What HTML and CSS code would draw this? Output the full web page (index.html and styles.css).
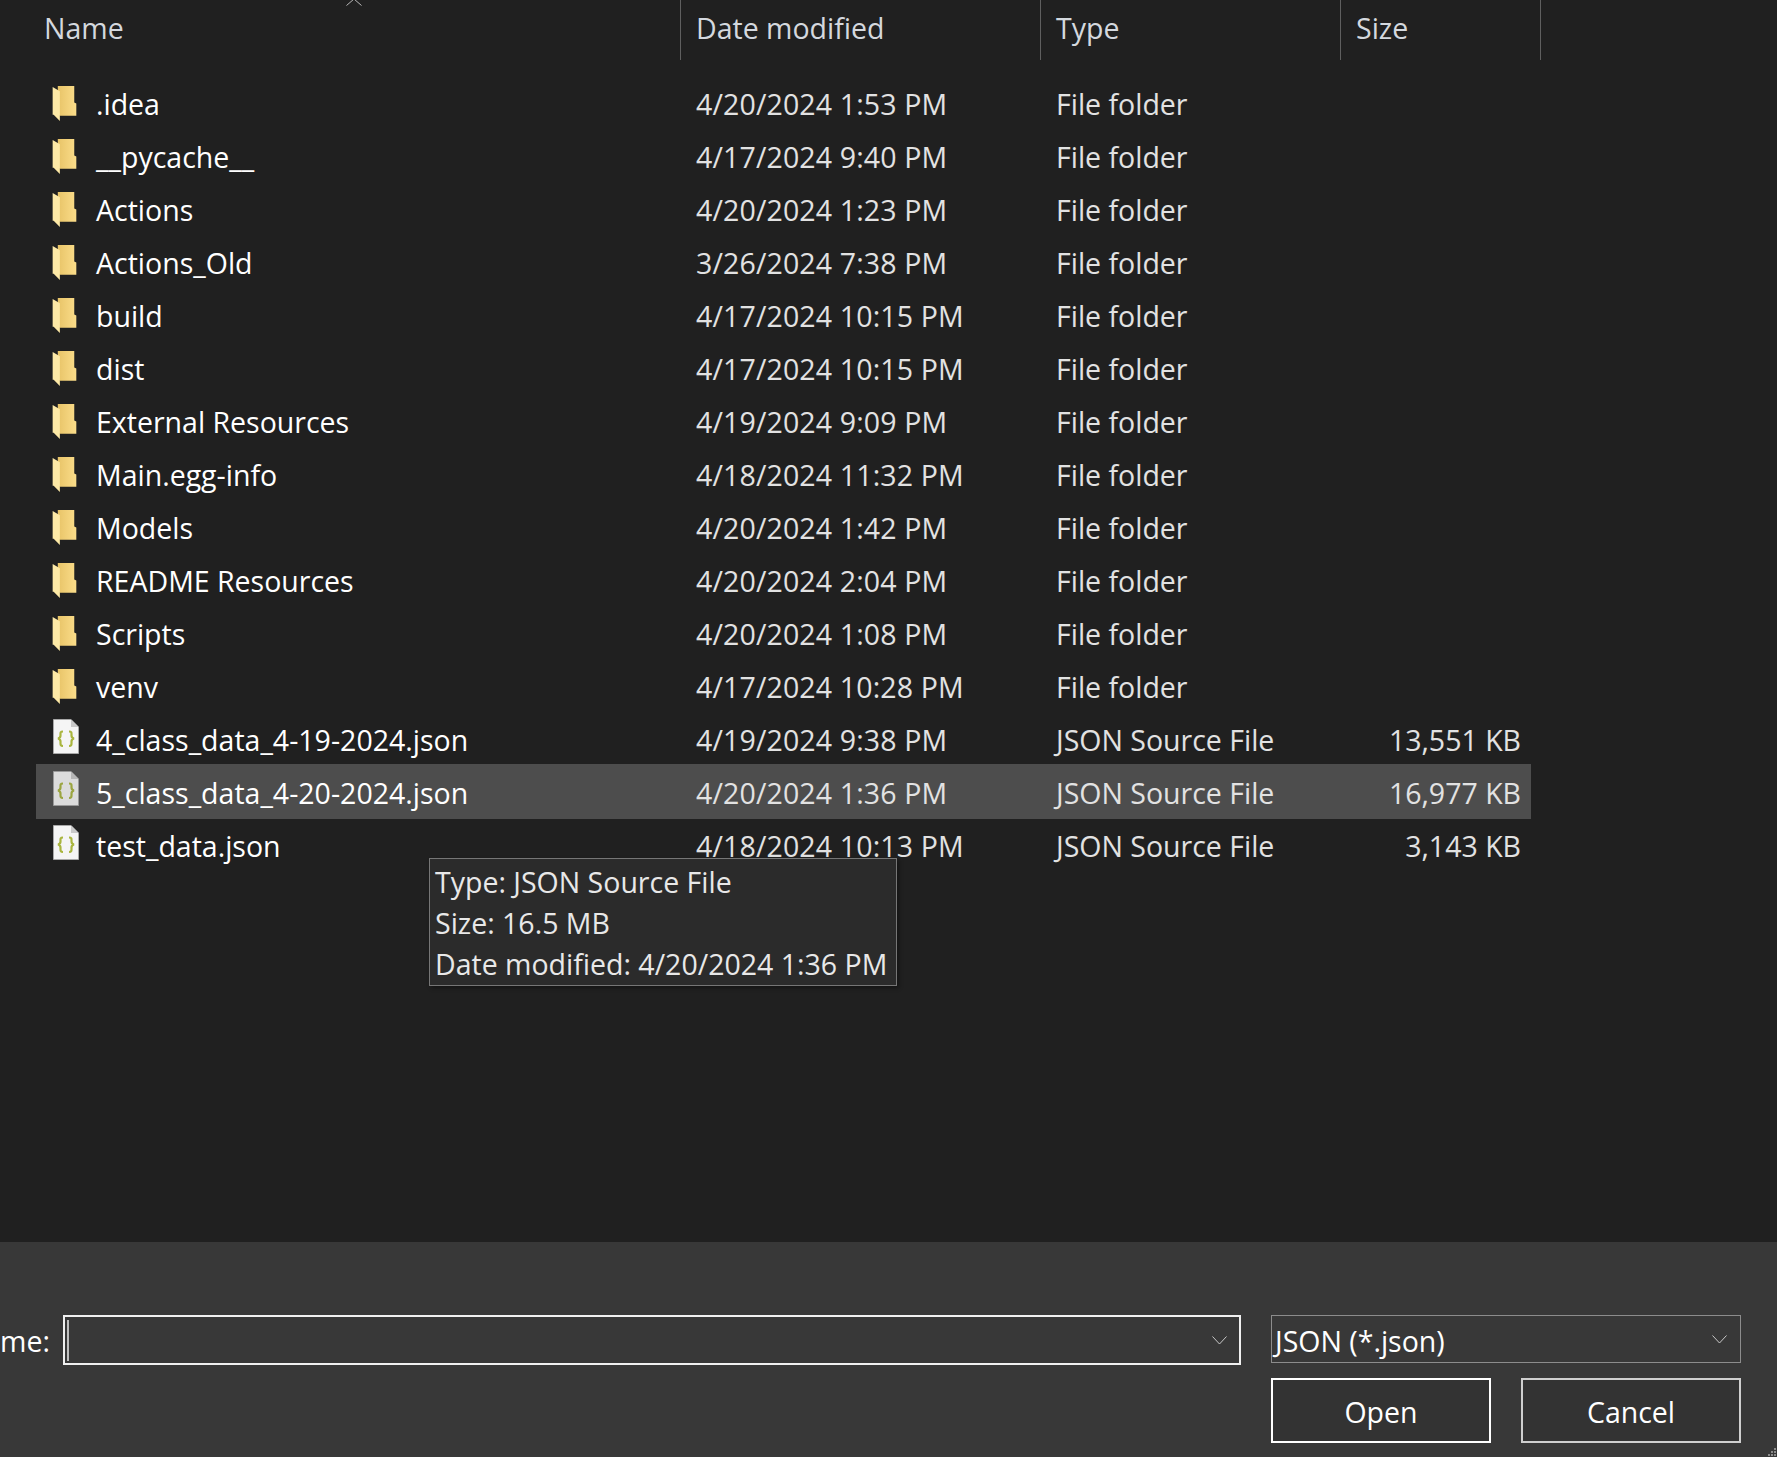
FILE: index.html
```html
<!DOCTYPE html>
<html lang="en">
<head>
  <meta charset="UTF-8">
  <title>Open</title>
  <link rel="stylesheet" href="styles.css">
</head>
<body>
  <svg class="defs" width="0" height="0">
    <defs>
      <linearGradient id="backFill" x1="0" y1="0" x2="1" y2="0">
        <stop offset="0" stop-color="#e8c468"/>
        <stop offset="1" stop-color="#fbdd8a"/>
      </linearGradient>
      <symbol id="folder" viewBox="0 0 24 35">
        <path d="M5 1H21V17L23 18V30H7L5 28Z" fill="url(#backFill)"/>
        <path d="M0 2L7 6V35L1 29H0Z" fill="#fde9a6"/>
      </symbol>
      <symbol id="json" viewBox="0 0 26 35">
        <path d="M.5 .5H18L25.5 8V34.500H.5Z" fill="#f5f5f5" stroke="#a8a8a8"/>
        <path d="M18 .5V8H25.5Z" fill="#c9c9c9"/>
        <path d="M10 12.500C7 12.500 7.500 14 7.500 16.500C7.500 18.500 7 19 5 19.500C7 20 7.500 20.500 7.500 22.500C7.500 25 7 27 10 27M16 12.500C19 12.500 18.500 14 18.500 16.500C18.500 18.500 19 19 21 19.500C19 20 18.500 20.500 18.500 22.500C18.500 25 19 27 16 27" fill="none" stroke="#a9b53e" stroke-width="2.200"/>
      </symbol>
      <symbol id="chevron" viewBox="0 0 15 9">
        <path d="M.5 .5L7.500 8L14.500 .5" fill="none" stroke="#c8c8c8"/>
      </symbol>
    </defs>
  </svg>

  <div class="main">
    <div class="header">
      <div class="col col-name">Name
        <svg class="sort" width="16" height="7" viewBox="0 0 16 7"><path d="M.5 6.500L8 0L15.500 6.500" fill="none" stroke="#b8b8b8"/></svg>
      </div>
      <div class="col col-date">Date modified</div>
      <div class="col col-type">Type</div>
      <div class="col col-size">Size</div>
    </div>

    <div class="list">
      <div class="row"><svg class="icon"><use href="#folder"/></svg><span class="name">.idea</span><span class="date">4/20/2024 1:53 PM</span><span class="type">File folder</span><span class="size"></span></div>
      <div class="row"><svg class="icon"><use href="#folder"/></svg><span class="name">__pycache__</span><span class="date">4/17/2024 9:40 PM</span><span class="type">File folder</span><span class="size"></span></div>
      <div class="row"><svg class="icon"><use href="#folder"/></svg><span class="name">Actions</span><span class="date">4/20/2024 1:23 PM</span><span class="type">File folder</span><span class="size"></span></div>
      <div class="row"><svg class="icon"><use href="#folder"/></svg><span class="name">Actions_Old</span><span class="date">3/26/2024 7:38 PM</span><span class="type">File folder</span><span class="size"></span></div>
      <div class="row"><svg class="icon"><use href="#folder"/></svg><span class="name">build</span><span class="date">4/17/2024 10:15 PM</span><span class="type">File folder</span><span class="size"></span></div>
      <div class="row"><svg class="icon"><use href="#folder"/></svg><span class="name">dist</span><span class="date">4/17/2024 10:15 PM</span><span class="type">File folder</span><span class="size"></span></div>
      <div class="row"><svg class="icon"><use href="#folder"/></svg><span class="name">External Resources</span><span class="date">4/19/2024 9:09 PM</span><span class="type">File folder</span><span class="size"></span></div>
      <div class="row"><svg class="icon"><use href="#folder"/></svg><span class="name">Main.egg-info</span><span class="date">4/18/2024 11:32 PM</span><span class="type">File folder</span><span class="size"></span></div>
      <div class="row"><svg class="icon"><use href="#folder"/></svg><span class="name">Models</span><span class="date">4/20/2024 1:42 PM</span><span class="type">File folder</span><span class="size"></span></div>
      <div class="row"><svg class="icon"><use href="#folder"/></svg><span class="name">README Resources</span><span class="date">4/20/2024 2:04 PM</span><span class="type">File folder</span><span class="size"></span></div>
      <div class="row"><svg class="icon"><use href="#folder"/></svg><span class="name">Scripts</span><span class="date">4/20/2024 1:08 PM</span><span class="type">File folder</span><span class="size"></span></div>
      <div class="row"><svg class="icon"><use href="#folder"/></svg><span class="name">venv</span><span class="date">4/17/2024 10:28 PM</span><span class="type">File folder</span><span class="size"></span></div>
      <div class="row"><svg class="icon icon-file"><use href="#json"/></svg><span class="name">4_class_data_4-19-2024.json</span><span class="date">4/19/2024 9:38 PM</span><span class="type">JSON Source File</span><span class="size">13,551 KB</span></div>
      <div class="row selected"><svg class="icon icon-file"><use href="#json"/></svg><span class="name">5_class_data_4-20-2024.json</span><span class="date">4/20/2024 1:36 PM</span><span class="type">JSON Source File</span><span class="size">16,977 KB</span></div>
      <div class="row"><svg class="icon icon-file"><use href="#json"/></svg><span class="name">test_data.json</span><span class="date">4/18/2024 10:13 PM</span><span class="type">JSON Source File</span><span class="size">3,143 KB</span></div>
    </div>

    <div class="tooltip">
      <div>Type: JSON Source File</div>
      <div>Size: 16.5 MB</div>
      <div>Date modified: 4/20/2024 1:36 PM</div>
    </div>
  </div>

  <div class="footer">
    <label class="file-label">me:</label>
    <div class="field file-input">
      <span class="caret"></span>
      <svg class="chevron"><use href="#chevron"/></svg>
    </div>
    <div class="field file-type">
      <span class="file-type-text">JSON (*.json)</span>
      <svg class="chevron"><use href="#chevron"/></svg>
    </div>
    <div class="buttons">
      <button class="btn btn-open">Open</button>
      <button class="btn btn-cancel">Cancel</button>
    </div>
    <svg class="grip" width="10" height="10" viewBox="0 0 10 10"><path d="M7 1h2v2H7zM4 4h2v2H4zM7 4h2v2H7zM1 7h2v2H1zM4 7h2v2H4zM7 7h2v2H7z" fill="#8a8a8a"/></svg>
  </div>
</body>
</html>
```

FILE: styles.css
```css
*{
  margin: 0;
  padding: 0;
  box-sizing: border-box;
}
html, body{
  height: 1457px;
  overflow: hidden;
}
body{
  background-color: #202020;
  color: #fff;
  font-family: "Open Sans", "Noto Sans", sans-serif;
  font-size: 28.5px;
  display: flex;
  flex-direction: column;
}
.defs{
  position: absolute;
}

.main{
  height: 1242px;
  position: relative;
}
.header{
  display: flex;
  height: 60px;
  color: #d4d8de;
}
.col{
  border-right: 1px solid #5f5f5f;
  line-height: 56px;
  position: relative;
}
.col-name{
  width: 681px;
  padding-left: 44px;
}
.col-date{
  width: 360px;
  padding-left: 15px;
}
.col-type{
  width: 300px;
  padding-left: 15px;
}
.col-size{
  width: 200px;
  padding-left: 15px;
}
.sort{
  position: absolute;
  left: 346px;
  top: -1px;
}

.list{
  margin: 17px 0 0 36px;
  width: 1495px;
}
.row{
  display: flex;
  align-items: center;
  height: 53px;
}
.row.selected{
  background-color: #4d4d4d;
  height: 55px;
  margin: -2px 0 0;
  padding-top: 2px;
}
.icon{
  width: 26px;
  height: 36px;
  margin: -2px 18px 0 16px;
  flex: none;
}
.icon-file{
  height: 35px;
  margin: -6px 17px 0 17px;
}
.selected .icon-file{
  margin-top: -8px;
  opacity: 0.85;
}
.name{
  width: 600px;
}
.date{
  width: 360px;
  color: #e2e2e2;
  letter-spacing: 0.14px;
}
.type{
  width: 300px;
  color: #e2e2e2;
}
.size{
  width: 165px;
  text-align: right;
  color: #e2e2e2;
}

.tooltip{
  position: absolute;
  left: 429px;
  top: 858px;
  width: 468px;
  height: 128px;
  padding: 3px 0 0 5px;
  background-color: #2b2b2b;
  border: 1px solid #767676;
  box-shadow: 2px 2px 4px rgba(0, 0, 0, 0.4);
  color: #e8e8e8;
  line-height: 41px;
  white-space: nowrap;
}

.footer{
  height: 215px;
  background-color: #383838;
  padding-top: 73px;
  display: grid;
  grid-template-columns: 63px 1178px 470px;
  grid-template-rows: 50px 65px;
  row-gap: 13px;
  position: relative;
}
.file-label{
  line-height: 52px;
}
.field{
  display: flex;
  align-items: center;
  justify-content: space-between;
  height: 50px;
}
.file-input{
  border: 2px solid #f0f0f0;
  padding: 0 12px 0 2px;
}
.caret{
  width: 2px;
  height: 41px;
  background-color: #c0c0c0;
}
.file-type{
  height: 48px;
  margin-left: 30px;
  width: 470px;
  border: 1px solid #8c8c8c;
  padding: 0 13px 0 3px;
}
.file-type-text{
  padding-top: 3px;
}
.chevron{
  width: 15px;
  height: 9px;
  flex: none;
}
.buttons{
  grid-column: 3;
  margin-left: 30px;
  width: 470px;
  display: flex;
  gap: 30px;
}
.btn{
  flex: 1;
  background-color: #333;
  color: #fff;
  font: inherit;
  padding-top: 2px;
}
.btn-open{
  border: 2px solid #fff;
}
.btn-cancel{
  border: 2px solid #cfcfcf;
}
.grip{
  position: absolute;
  right: 0;
  bottom: 0;
}
```
